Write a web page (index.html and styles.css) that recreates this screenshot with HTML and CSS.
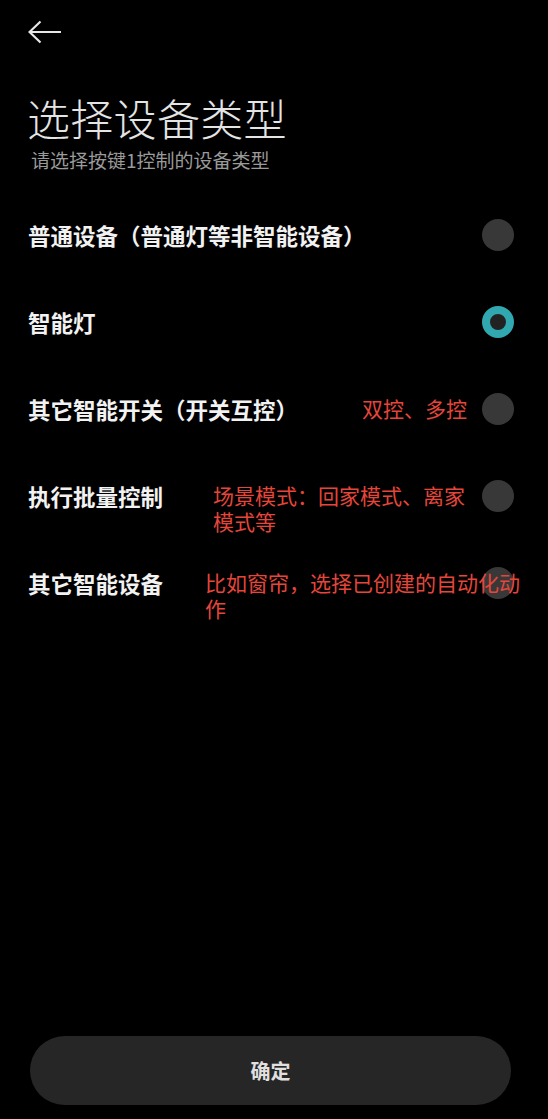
FILE: index.html
```html
<html>

<head>
    <meta charset="UTF-8" />
    <title>选择设备类型</title>
    <link rel="stylesheet" href="styles.css">
</head>

<body>
    <div class="page">
        <div class="back">
            <svg width="34" height="26" viewBox="0 0 34 26">
                <path d="M33 12H2.5M12.5 1.5L1.5 12L12.5 22.5" fill="none" stroke="#e6e6e6" stroke-width="2.2" />
            </svg>
        </div>
        <h1 class="title">选择设备类型</h1>
        <div class="sub">请选择按键1控制的设备类型</div>

        <div class="list">
            <div class="row">
                <span class="label">普通设备（普通灯等非智能设备）</span>
                <span class="radio"></span>
            </div>
            <div class="row">
                <span class="label">智能灯</span>
                <span class="radio on"></span>
            </div>
            <div class="row">
                <span class="label">其它智能开关（开关互控）</span>
                <span class="note n3">双控、多控</span>
                <span class="radio"></span>
            </div>
            <div class="row">
                <span class="label">执行批量控制</span>
                <span class="note n4">场景模式：回家模式、离家模式等</span>
                <span class="radio"></span>
            </div>
            <div class="row">
                <span class="label">其它智能设备</span>
                <span class="note n5">比如窗帘，选择已创建的自动化动作</span>
                <span class="radio"></span>
            </div>
        </div>

        <div class="btn">确定</div>
    </div>
</body>

</html>
```

FILE: styles.css
```css
body {
    margin: 0;
    padding: 0;
    background-color: #000;
    color: #f0f0f0;
    font-family: "Noto Sans CJK SC", "Noto Sans", sans-serif;
}

.page {
    height: 1119px;
    display: flex;
    flex-direction: column;
    box-sizing: border-box;
}

.back {
    margin: 20px 0 0 28px;
    height: 26px;
}

.back svg {
    display: block;
}

.title {
    margin: 45px 0 0 27px;
    font-size: 43px;
    font-weight: 300;
    line-height: 52px;
    color: #e4e4e4;
    letter-spacing: 0.3px;
}

.sub {
    margin: 4px 0 0 31px;
    font-size: 19px;
    line-height: 26px;
    color: #9a9a9a;
}

.list {
    margin-top: 18px;
}

.row {
    position: relative;
    height: 87px;
    display: flex;
    align-items: center;
    justify-content: space-between;
    padding: 0 34px 0 28px;
}

.label {
    font-size: 22.5px;
    font-weight: bold;
    line-height: 30px;
    color: #f2f2f2;
}

.radio {
    width: 32px;
    height: 32px;
    border-radius: 50%;
    background-color: #383838;
    box-sizing: border-box;
}

.radio.on {
    background-color: #222;
    border: 8px solid #31a8b0;
}

/* red notes written over the screenshot */
.note {
    position: absolute;
    z-index: 2;
    font-size: 21px;
    line-height: 26px;
    color: #e5463b;
}

.n3 {
    left: 362px;
    top: 30px;
}

.n4 {
    left: 213px;
    top: 30px;
    width: 262px;
}

.n5 {
    left: 205px;
    top: 30px;
    width: 325px;
}

.btn {
    margin: auto 37px 14px 30px;
    height: 69px;
    border-radius: 35px;
    background-color: #262626;
    color: #e0e0e0;
    font-size: 20px;
    font-weight: bold;
    display: flex;
    align-items: center;
    justify-content: center;
}
```
